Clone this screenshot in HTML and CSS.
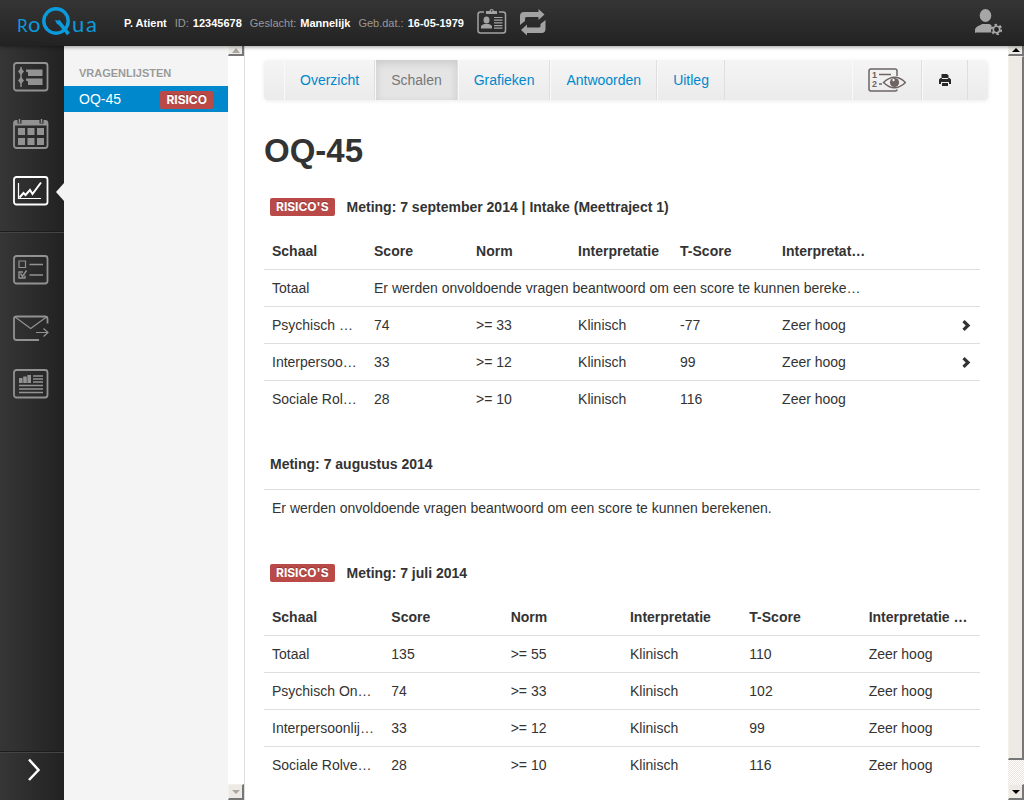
FILE: index.html
```html
<!DOCTYPE html>
<html lang="nl">
<head>
<meta charset="utf-8">
<title>RoQua - OQ-45</title>
<link rel="stylesheet" href="styles.css">
</head>
<body>
<header class="topbar">
  <a class="logo" href="#" aria-label="RoQua">
    <svg width="82" height="34" viewBox="0 0 82 34">
      <g class="logo-text"><text x="0" y="27" font-size="17">R</text><text x="11" y="27" font-size="22">o</text><text x="55" y="27" font-size="22">u</text><text x="69" y="27" font-size="22">a</text></g>
      <circle cx="39" cy="16" r="12.2" fill="none" stroke="#0b9bdc" stroke-width="3.4"/>
      <path d="M41 16l10.500 13" stroke="#0b9bdc" stroke-width="3.600"/>
      <path d="M38 15l5 1 2 5-5-2z" fill="#0b9bdc"/>
    </svg>
  </a>
  <dl class="patient">
    <div><dd>P. Atient</dd></div>
    <div><dt>ID:</dt><dd>12345678</dd></div>
    <div><dt>Geslacht:</dt><dd>Mannelijk</dd></div>
    <div><dt>Geb.dat.:</dt><dd>16-05-1979</dd></div>
  </dl>
  <button class="icon-button" type="button" aria-label="Dossier">
    <svg width="30" height="26" viewBox="0 0 30 26" fill="none" stroke="#a3a3a3" stroke-width="1.500">
      <path d="M7 3H3.500Q1 3 1 5.500v16Q1 24 3.500 24h22.500Q28.500 24 28.500 21.500v-16Q28.500 3 26 3H22"/>
      <path d="M9 2h3.500q0-2 2.200-2t2.200 2H20v3H9z" fill="#a3a3a3" stroke="none"/>
      <circle cx="14.700" cy="1.800" r=".8" fill="#2b2b2b" stroke="none"/>
      <ellipse cx="9.500" cy="11" rx="3" ry="3.600" fill="#a3a3a3" stroke="none"/>
      <path d="M4 19.500v-2q0-1.500 3.500-2.500h4q3.500 1 3.500 2.500v2z" fill="#a3a3a3" stroke="none"/>
      <path d="M17 8.500h8.500M17 11.200h8.500M17 13.900h8.500M17 16.600h8.500M17 19.200h8.500" stroke-width="1.200"/>
    </svg>
  </button>
  <button class="icon-button" type="button" aria-label="Wissel">
    <svg width="28" height="27" viewBox="0 0 28 27" fill="#a3a3a3">
      <path d="M1 16V7Q1 3 5 3h14.500V0L25.500 5.500 19.500 11V8H7.500Q6 8 6 9.500V12z"/>
      <path d="M26.500 11v9q0 4-4 4H8v2.500L2 21l6-5.500V18.500h12q1.500 0 1.500-1.500v-2z"/>
    </svg>
  </button>
  <button class="icon-button user" type="button" aria-label="Gebruiker">
    <svg width="28" height="26" viewBox="0 0 28 26">
      <ellipse cx="11.500" cy="6.500" rx="5.800" ry="6.500" fill="#a6a6a6"/>
      <path d="M1 23.500V21q0-3 5.500-5l1.500-1h7.500l2 1.300-.5 7.200H2.500Q1 24 1 23.500z" fill="#a6a6a6"/>
      <circle cx="22.500" cy="20.500" r="4.800" fill="none" stroke="#a6a6a6" stroke-width="2" stroke-dasharray="2.500 2.520"/>
      <circle cx="22.500" cy="20.500" r="3.200" fill="#262626" stroke="#a6a6a6" stroke-width="1.600"/>
    </svg>
  </button>
</header>

<div class="workspace">
  <nav class="rail" aria-label="Hoofdmenu">
    <div class="rail-group">
      <a href="#" aria-label="Overzicht"><svg width="36" height="30" viewBox="0 0 36 30" fill="none" stroke="#929292" stroke-width="1.800"><rect x="1" y="1" width="33.500" height="27.500" rx="2.500"/><path d="M8 5v20" stroke-width="1.400"/><path d="M8 6.500l2.500 3L8 12.500l-2.500-3zM8 15.500l2.500 3L8 21.500l-2.500-3z" fill="#929292" stroke-width="1"/><path d="M13 7.500h16.500V14H15v-3.500l-2-1zM13 16.500h16.500V23H15v-3.500l-2-1z" fill="#929292" stroke="none"/></svg></a>
      <a href="#" aria-label="Agenda"><svg width="36" height="30" viewBox="0 0 36 30"><path d="M3 1.500h30l1.500 1.500v3.500h-33V3z" fill="#929292"/><rect x="1" y="2" width="33.500" height="27" rx="2.500" fill="none" stroke="#929292" stroke-width="1.800"/><path d="M6.500 0v4.500M28.500 0v4.500" stroke="#2b2b2b" stroke-width="4"/><path d="M6.500 0v4M28.500 0v4" stroke="#929292" stroke-width="1.500"/><path d="M5 9h7v7H5zM14.500 9h7v7h-7zM24 9h7v7h-7zM5 19h7v7H5zM14.500 19h7v7h-7zM24 19h7v7h-7z" fill="#929292"/></svg></a>
      <a class="current" href="#" aria-label="Metingen" aria-current="page"><svg width="36" height="30" viewBox="0 0 36 30" fill="none" stroke="#fff" stroke-width="1.800"><rect x="1" y="1" width="33.500" height="27.500" rx="2.500"/><path d="M5.500 7v15.500H28" stroke-width="1.200"/><path d="M6.500 21.500l4-4.500 2 2 4.500-5 2.500 4L28 6.500" stroke-width="2"/></svg></a>
    </div>
    <div class="rail-group second">
      <a href="#" aria-label="Vragenlijsten"><svg width="36" height="30" viewBox="0 0 36 30" fill="none" stroke="#929292" stroke-width="1.800"><rect x="1" y="1" width="33.500" height="27.500" rx="2.500"/><path d="M6 6h6.500v6.500H6z" stroke-width="1.200"/><path d="M16.500 9.500h13.500M16.500 20h13.500" stroke-width="1.500"/><path d="M10 17H6v6h6v-2.500M7.500 18.500l2 3 4-6" stroke-width="1.400"/></svg></a>
      <a href="#" aria-label="Berichten"><svg width="36" height="30" viewBox="0 0 36 30" fill="none" stroke="#929292" stroke-width="1.800"><path d="M26 28H3.500Q1 28 1 25.500v-19Q1 4.500 3.500 4.500h28.500Q34.500 4.500 34.500 7v4.500"/><path d="M2 5l15.700 11.500L33.500 5M23 20.500h12M30.500 16.500l4.500 4-4.500 4" stroke-width="1.200"/></svg></a>
      <a href="#" aria-label="Rapporten"><svg width="36" height="30" viewBox="0 0 36 30" fill="none" stroke="#929292" stroke-width="1.800"><rect x="1" y="1" width="33.500" height="27.500" rx="2.500"/><path d="M6 9h3.600v5H6zM10.200 7.500h3.600V14h-3.600zM14.400 6H18v8h-3.600z" fill="#929292" stroke="none"/><path d="M20 7h10M20 10h10M20 13h10M6 16.500h24M6 20h24M6 23.500h24" stroke-width="1.500"/></svg></a>
    </div>
    <button class="rail-toggle" type="button" aria-label="Uitklappen"><svg width="12" height="24" viewBox="0 0 12 24"><path d="M1 1.500l9.500 10.500L1 22" fill="none" stroke="#fff" stroke-width="2.500"/></svg></button>
  </nav>

  <aside class="lists">
    <h2>VRAGENLIJSTEN</h2>
    <a class="list-item" href="#">OQ-45 <span class="badge">RISICO</span></a>
  </aside>
  <div class="scroll side" aria-hidden="true">
    <div class="arrow top"><svg width="8" height="5" viewBox="0 0 8 5"><path d="M0 5l4-5 4 5z" fill="#aaa6a0"/></svg></div>
    <div class="arrow bottom"><svg width="8" height="4" viewBox="0 0 8 4"><path d="M0 0h8L4 4z" fill="#aaa6a0"/></svg></div>
  </div>

  <main class="content">
    <nav class="tabs" aria-label="Weergave">
      <a href="#">Overzicht</a>
      <a class="active" href="#" aria-current="page">Schalen</a>
      <a href="#">Grafieken</a>
      <a href="#">Antwoorden</a>
      <a href="#">Uitleg</a>
      <a class="view" href="#" aria-label="Vragen bekijken"><svg width="38" height="24" viewBox="0 0 38 24" fill="none" stroke="#6e6464" stroke-width="1.500"><path d="M29 8V3Q29 1 27 1H3Q1 1 1 3v18q0 2 2 2h24q2 0 2-1.500"/><path d="M11 6.500h12M11 16h3"/><text x="4" y="10" font-size="9">1</text><text x="4" y="19" font-size="9">2</text><path d="M15.500 14.500Q26.500 4 37.500 14.500 26.500 25 15.500 14.500z" fill="#f1f1f1"/><circle cx="26.500" cy="14.500" r="4.600" fill="#6e6464" stroke="none"/><circle cx="25.500" cy="12" r="1.200" fill="#eee" stroke="none"/></svg></a>
      <a class="print" href="#" aria-label="Afdrukken"><svg width="12" height="12" viewBox="0 0 12 12" fill="#282828"><path d="M3 0h5l1.500 1.500V4H2.500V0z"/><path d="M1.500 4h1l.8 1h5.400l.8-1h1l1.500 1.500V10h-2V8h-8v2H0V5.500z"/><path d="M3 9h6v3H3z"/></svg></a>
    </nav>

    <h1>OQ-45</h1>

    <section class="measurement">
      <h2><span class="badge">RISICO'S</span>Meting: 7 september 2014 | Intake (Meettraject 1)</h2>
      <table class="with-details">
        <thead><tr><th>Schaal</th><th>Score</th><th>Norm</th><th>Interpretatie</th><th>T-Score</th><th>Interpretat…</th><th></th></tr></thead>
        <tbody>
          <tr><td>Totaal</td><td colspan="5">Er werden onvoldoende vragen beantwoord om een score te kunnen bereke…</td><td></td></tr>
          <tr><td>Psychisch …</td><td>74</td><td>&gt;= 33</td><td>Klinisch</td><td>-77</td><td>Zeer hoog</td><td class="more"><a href="#" aria-label="Meer"><svg width="10" height="11" viewBox="0 0 10 11"><path d="M1.500 1.200l4.500 4.300-4.500 4.300" fill="none" stroke="#333" stroke-width="3.200"/></svg></a></td></tr>
          <tr><td>Interpersoo…</td><td>33</td><td>&gt;= 12</td><td>Klinisch</td><td>99</td><td>Zeer hoog</td><td class="more"><a href="#" aria-label="Meer"><svg width="10" height="11" viewBox="0 0 10 11"><path d="M1.500 1.200l4.500 4.300-4.500 4.300" fill="none" stroke="#333" stroke-width="3.200"/></svg></a></td></tr>
          <tr><td>Sociale Rol…</td><td>28</td><td>&gt;= 10</td><td>Klinisch</td><td>116</td><td>Zeer hoog</td><td></td></tr>
        </tbody>
      </table>
    </section>

    <section class="measurement note">
      <h2>Meting: 7 augustus 2014</h2>
      <table>
        <tbody><tr><td>Er werden onvoldoende vragen beantwoord om een score te kunnen berekenen.</td></tr></tbody>
      </table>
    </section>

    <section class="measurement">
      <h2><span class="badge">RISICO'S</span>Meting: 7 juli 2014</h2>
      <table>
        <thead><tr><th>Schaal</th><th>Score</th><th>Norm</th><th>Interpretatie</th><th>T-Score</th><th>Interpretatie …</th></tr></thead>
        <tbody>
          <tr><td>Totaal</td><td>135</td><td>&gt;= 55</td><td>Klinisch</td><td>110</td><td>Zeer hoog</td></tr>
          <tr><td>Psychisch On…</td><td>74</td><td>&gt;= 33</td><td>Klinisch</td><td>102</td><td>Zeer hoog</td></tr>
          <tr><td>Interpersoonlij…</td><td>33</td><td>&gt;= 12</td><td>Klinisch</td><td>99</td><td>Zeer hoog</td></tr>
          <tr><td>Sociale Rolve…</td><td>28</td><td>&gt;= 10</td><td>Klinisch</td><td>116</td><td>Zeer hoog</td></tr>
        </tbody>
      </table>
    </section>
  </main>
  <div class="scroll page" aria-hidden="true">
    <div class="arrow top"><svg width="8" height="4" viewBox="0 0 8 4"><path d="M0 4l4-4 4 4z" fill="#000"/></svg></div>
    <div class="thumb"></div>
    <div class="arrow bottom"><svg width="8" height="4" viewBox="0 0 8 4"><path d="M0 0h8L4 4z" fill="#000"/></svg></div>
  </div>
</div>
</body>
</html>
```
FILE: styles.css
```css
* {
  box-sizing: border-box;
}

body {
  margin: 0;
  height: 100vh;
  display: flex;
  flex-direction: column;
  overflow: hidden;
  background: #fff;
  color: #333;
  font: 14px/20px "Liberation Sans", Helvetica, Arial, sans-serif;
}

a {
  color: #0088cc;
  text-decoration: none;
}

svg {
  display: block;
}

button {
  padding: 0;
  border: 0;
  background: none;
  cursor: pointer;
}

h1,
h2,
dl,
dd {
  margin: 0;
}

/* Top bar */
.topbar {
  position: relative;
  z-index: 1;
  flex: none;
  display: flex;
  align-items: center;
  height: 46px;
  padding: 0 22px 2px 17px;
  background: linear-gradient(#353535, #222);
  box-shadow: 0 1px 4px rgba(0, 0, 0, 0.4);
}

.logo-text {
  font-family: Lato, sans-serif;
  fill: #0b9bdc;
}

.patient {
  display: flex;
  gap: 8px;
  margin: 0 13px 0 25px;
  padding-top: 2px;
  font-size: 11px;
  white-space: nowrap;
}

.patient div {
  display: flex;
  gap: 4px;
}

.patient dt {
  color: #999;
}

.patient dd {
  color: #fff;
  font-weight: bold;
}

.icon-button + .icon-button {
  margin-left: 12px;
}

.topbar .user {
  margin-left: auto;
}

.workspace {
  flex: 1;
  min-height: 0;
  display: flex;
}

/* Icon rail */
.rail {
  flex: none;
  display: flex;
  flex-direction: column;
  width: 64px;
  padding-top: 2px;
  background: linear-gradient(90deg, #363636, #222);
}

.rail-group {
  padding-bottom: 13px;
}

.rail-group.second {
  padding-top: 8px;
  border-top: 1px solid #444;
  box-shadow: 0 -1px 0 #1c1c1c;
}

.rail-group a {
  display: flex;
  align-items: center;
  height: 57px;
  padding-left: 13px;
}

.rail-group .current {
  position: relative;
}

.current::after {
  content: "";
  position: absolute;
  right: 0;
  top: 21px;
  border: solid transparent;
  border-width: 9px 8px 9px 0;
  border-right-color: #f4f4f4;
}

.rail-toggle {
  display: flex;
  height: 48px;
  margin-top: auto;
  padding: 5px 0 0 28px;
  border-top: 1px solid #444;
  box-shadow: 0 -1px 0 #1c1c1c;
}

/* Questionnaire list */
.lists {
  flex: none;
  width: 164px;
  padding-top: 17px;
  background: #f4f4f4;
}

.lists h2 {
  padding: 0 15px 3px;
  color: #999;
  font-size: 11px;
  line-height: 20px;
  text-shadow: 0 1px 0 #fff;
}

.list-item {
  display: flex;
  align-items: center;
  justify-content: space-between;
  height: 26px;
  padding: 0 15px;
  background: #0088cc;
  color: #fff;
}

.badge {
  padding: 0 6px;
  border-radius: 2px;
  background: #b94a48;
  color: #fff;
  font: bold 12px/18px Inter, "Liberation Sans", sans-serif;
  text-shadow: 0 -1px 0 rgba(0, 0, 0, 0.25);
}

.list-item .badge {
  margin-top: 2px;
}

/* Scroll bars */
.scroll {
  flex: none;
  display: flex;
  flex-direction: column;
  width: 16px;
}

.scroll.side {
  width: 17px;
  border-right: 1px solid #ddd;
}

.scroll.page {
  background: repeating-conic-gradient(#e9e5de 0 25%, #fff 0 50%) 0 0 / 2px 2px;
}

.arrow,
.thumb {
  border: 1px solid #f4f1ec;
  border-right: 2px solid #777;
  border-bottom: 2px solid #777;
  background: #edeae5;
}

.arrow {
  display: flex;
  align-items: center;
  justify-content: center;
  height: 16px;
}

.arrow.top {
  height: 10px;
  border-top: 0;
}

.arrow.bottom {
  margin-top: auto;
}

.thumb {
  flex: 0 1 704px;
  margin-bottom: 24px;
}

/* Content */
.content {
  flex: 1;
  min-width: 0;
  padding: 14px 20px 0 19px;
  overflow: hidden;
}

.tabs {
  display: flex;
  height: 40px;
  padding: 0 20px;
  border-radius: 4px;
  background: linear-gradient(#f5f5f5, #ebebeb);
  box-shadow: 0 1px 4px rgba(0, 0, 0, 0.08);
}

.tabs a {
  display: flex;
  align-items: center;
  padding: 0 15px;
  border-left: 1px solid #f9f9f9;
  border-right: 1px solid #dfdfdf;
}

.tabs .active {
  background: #e5e5e5;
  box-shadow: inset 0 3px 8px rgba(0, 0, 0, 0.12);
  color: #777;
}

.tabs .view {
  margin-left: auto;
}

.tabs .view text {
  fill: #6e6464;
  stroke: none;
  font-weight: bold;
}

.tabs .print {
  padding: 0 16px;
}

h1 {
  margin: 31px 0 26px;
  font-size: 33px;
  line-height: 40px;
}

.measurement {
  margin: 0 8px 36px 0;
}

.measurement.note {
  margin-bottom: 37px;
}

.measurement h2 {
  display: flex;
  align-items: center;
  gap: 12px;
  margin: 0 6px 15px;
  font-size: 14px;
  line-height: 20px;
}

table {
  width: 100%;
  table-layout: fixed;
  border-collapse: collapse;
}

th,
td {
  height: 37px;
  padding: 8px;
  border-top: 1px solid #ddd;
  line-height: 20px;
  text-align: left;
  white-space: nowrap;
}

th {
  border-top-color: transparent;
}

.with-details th:not(:last-child) {
  width: 14.25%;
}

.more a {
  display: flex;
  justify-content: flex-end;
}
```
